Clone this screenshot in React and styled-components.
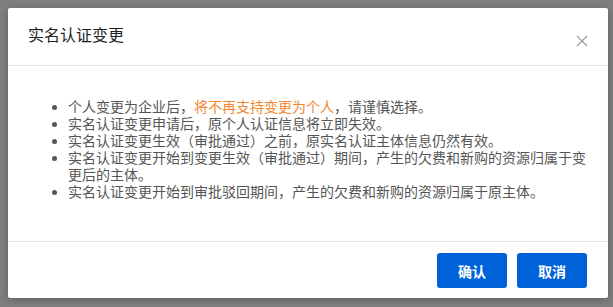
import React from "react";
import styled, { createGlobalStyle } from "styled-components";

const GlobalStyle = createGlobalStyle`
  html, body {
    margin: 0;
    padding: 0;
    background: #7f7f7f;
    font-family: "Microsoft YaHei", "Noto Sans CJK SC", "Liberation Sans", sans-serif;
  }
`;

const Overlay = styled.div`
  width: 613px;
  height: 307px;
  padding: 8px 5px 9px 8px;
  box-sizing: border-box;
`;

const Dialog = styled.div`
  width: 600px;
  height: 290px;
  background: #fff;
  border-radius: 2px;
  box-shadow: 0 2px 8px rgba(0, 0, 0, 0.25);
  display: flex;
  flex-direction: column;
`;

const Header = styled.div`
  height: 58px;
  display: flex;
  align-items: center;
  justify-content: space-between;
  padding: 0 20px 0 20px;
  border-bottom: 1px solid #e3e3e3;
  box-sizing: border-box;
`;

const Title = styled.h3`
  margin: 0 0 6px 0;
  font-size: 16px;
  font-weight: normal;
  color: #222;
`;

const Close = styled.button`
  border: none;
  background: none;
  padding: 0;
  margin-top: 8px;
  width: 12px;
  height: 12px;
  display: flex;
  cursor: pointer;
`;

const Body = styled.div`
  flex: 1;
  padding: 32px 14px 0 14px;
`;

const List = styled.ul`
  margin: 0;
  padding-left: 46px;
  list-style: disc;
  color: #555;
  font-size: 14px;
  line-height: 17px;

  li::marker {
    font-size: 12px;
  }
`;

const Warn = styled.span`
  color: #f5862c;
`;

const Footer = styled.div`
  height: 57px;
  border-top: 1px solid #e3e3e3;
  display: flex;
  justify-content: flex-end;
  align-items: flex-start;
  gap: 10px;
  padding: 11px 21px 0 0;
  box-sizing: border-box;
`;

const Button = styled.button`
  width: 70px;
  height: 35px;
  border: none;
  border-radius: 3px;
  background: #0062d8;
  color: #fff;
  font-size: 14px;
  font-weight: bold;
  font-family: inherit;
  cursor: pointer;
`;

const items = [
  null,
  "实名认证变更申请后，原个人认证信息将立即失效。",
  "实名认证变更生效（审批通过）之前，原实名认证主体信息仍然有效。",
  "实名认证变更开始到变更生效（审批通过）期间，产生的欠费和新购的资源归属于变更后的主体。",
  "实名认证变更开始到审批驳回期间，产生的欠费和新购的资源归属于原主体。",
];

export default function App() {
  return (
    <>
      <GlobalStyle />
      <Overlay>
        <Dialog>
          <Header>
            <Title>实名认证变更</Title>
            <Close aria-label="关闭">
              <svg width="12" height="12" viewBox="0 0 12 12">
                <path d="M1 1L11 11M11 1L1 11" stroke="#999" strokeWidth="1.1" />
              </svg>
            </Close>
          </Header>
          <Body>
            <List>
              {items.map((text, i) =>
                text ? (
                  <li key={i}>{text}</li>
                ) : (
                  <li key={i}>
                    个人变更为企业后，<Warn>将不再支持变更为个人</Warn>，请谨慎选择。
                  </li>
                )
              )}
            </List>
          </Body>
          <Footer>
            <Button>确认</Button>
            <Button>取消</Button>
          </Footer>
        </Dialog>
      </Overlay>
    </>
  );
}
